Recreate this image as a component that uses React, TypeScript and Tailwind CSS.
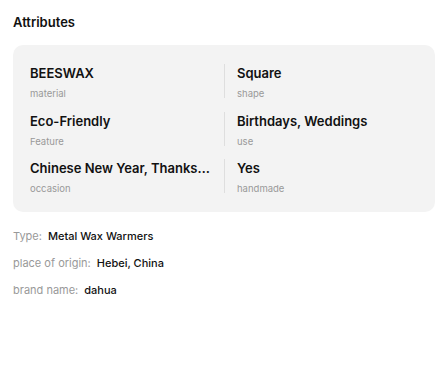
import React from 'react'

const attributes = [
  { value: 'BEESWAX', label: 'material' },
  { value: 'Square', label: 'shape' },
  { value: 'Eco-Friendly', label: 'Feature' },
  { value: 'Birthdays, Weddings', label: 'use' },
  { value: 'Chinese New Year, Thanksgiving, Christmas', label: 'occasion' },
  { value: 'Yes', label: 'handmade' },
]

const details = [
  { key: 'Type:', value: 'Metal Wax Warmers' },
  { key: 'place of origin:', value: 'Hebei, China' },
  { key: 'brand name:', value: 'dahua' },
]

export default function App() {
  return (
    <div className="w-[448px] h-[377px] bg-white px-[13px] pt-[14px] font-['Inter',sans-serif]">
      <h2 className="text-[13px] font-semibold text-[#111] leading-[16px]">Attributes</h2>

      {/* attribute grid */}
      <div className="mt-[15px] bg-[#f3f3f3] rounded-[10px] px-[17px] pt-[19px] pb-[19px] grid grid-cols-2 gap-y-[13.5px]">
        {attributes.map((a, i) => (
          <div
            key={a.label}
            className={
              i % 2 === 1
                ? 'border-l border-[#dedede] pl-[12px] h-[34px] flex flex-col justify-between min-w-0'
                : 'pr-[12px] h-[34px] flex flex-col justify-between min-w-0'
            }
          >
            <span className="text-[13px] font-semibold text-[#111] leading-[18px] truncate">{a.value}</span>
            <span className="text-[9.5px] text-[#999] leading-[9px]">{a.label}</span>
          </div>
        ))}
      </div>

      {/* extra details */}
      <div className="mt-[17px] flex flex-col gap-[13px]">
        {details.map((d) => (
          <div key={d.key} className="flex items-center gap-[6px] text-[11px] leading-[14px]">
            <span className="text-[#999]">{d.key}</span>
            <span className="text-[#111] font-medium">{d.value}</span>
          </div>
        ))}
      </div>
    </div>
  )
}
